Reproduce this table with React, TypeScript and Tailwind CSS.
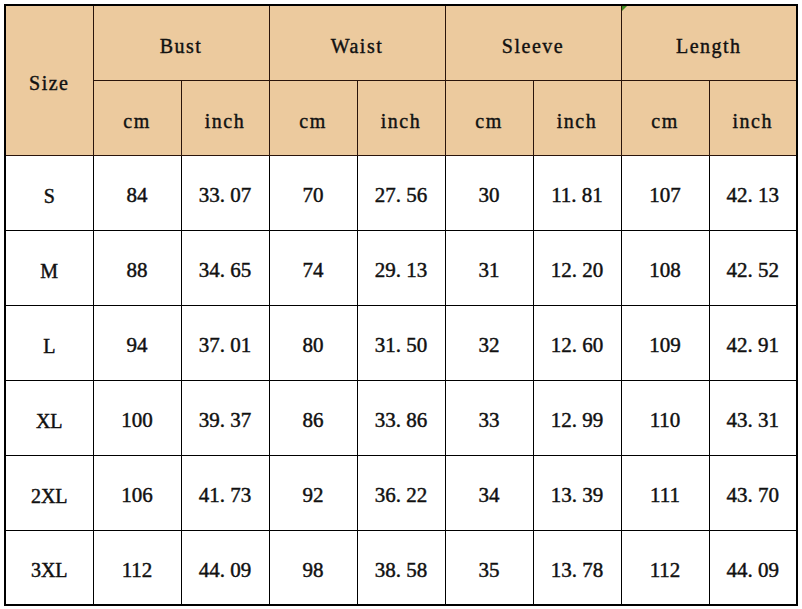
import React from "react";

const groups = ["Bust", "Waist", "Sleeve", "Length"];

const rows = [
  { size: "S", values: ["84", "33.07", "70", "27.56", "30", "11.81", "107", "42.13"] },
  { size: "M", values: ["88", "34.65", "74", "29.13", "31", "12.20", "108", "42.52"] },
  { size: "L", values: ["94", "37.01", "80", "31.50", "32", "12.60", "109", "42.91"] },
  { size: "XL", values: ["100", "39.37", "86", "33.86", "33", "12.99", "110", "43.31"] },
  { size: "2XL", values: ["106", "41.73", "92", "36.22", "34", "13.39", "111", "43.70"] },
  { size: "3XL", values: ["112", "44.09", "98", "38.58", "35", "13.78", "112", "44.09"] },
];

// the source chart uses a CJK font with a full-width period, so leave a gap after the dot
const fmt = (v: string) => v.replace(".", ". ");

const headCell =
  "border border-[#2a140b] pt-[6px] text-[20px] font-normal tracking-[1.5px] [-webkit-text-stroke:0.4px_#111]";
const bodyCell = "border border-black pt-[6px] text-center [-webkit-text-stroke:0.45px_#111]";

export default function App() {
  return (
    <div className="min-h-screen bg-white pt-[4px] pl-[4px]">
      <table className="w-[794px] table-fixed border-collapse border-2 border-black text-[#111] font-['Liberation_Serif',serif]">
        <thead>
          <tr className="h-[75px] bg-[#ecca9e]">
            <th rowSpan={2} className={`w-[88px] ${headCell}`}>
              Size
            </th>
            {groups.map((g) => (
              <th key={g} colSpan={2} className={`relative ${headCell}`}>
                {g === "Length" && (
                  <span className="absolute left-0 top-0 h-0 w-0 border-t-[5px] border-r-[5px] border-t-[#3d8a1f] border-r-transparent" />
                )}
                {g}
              </th>
            ))}
          </tr>
          <tr className="h-[75px] bg-[#ecca9e]">
            {groups.map((g) => (
              <React.Fragment key={g}>
                <th className={`w-[88px] ${headCell}`}>cm</th>
                <th className={`w-[88px] ${headCell}`}>inch</th>
              </React.Fragment>
            ))}
          </tr>
        </thead>
        <tbody>
          {rows.map((r) => (
            <tr key={r.size} className="h-[75px]">
              <td className={`${bodyCell} text-[20px]`}>{r.size}</td>
              {r.values.map((v, i) => (
                <td key={i} className={`${bodyCell} text-[21px] whitespace-pre`}>
                  {fmt(v)}
                </td>
              ))}
            </tr>
          ))}
        </tbody>
      </table>
    </div>
  );
}
